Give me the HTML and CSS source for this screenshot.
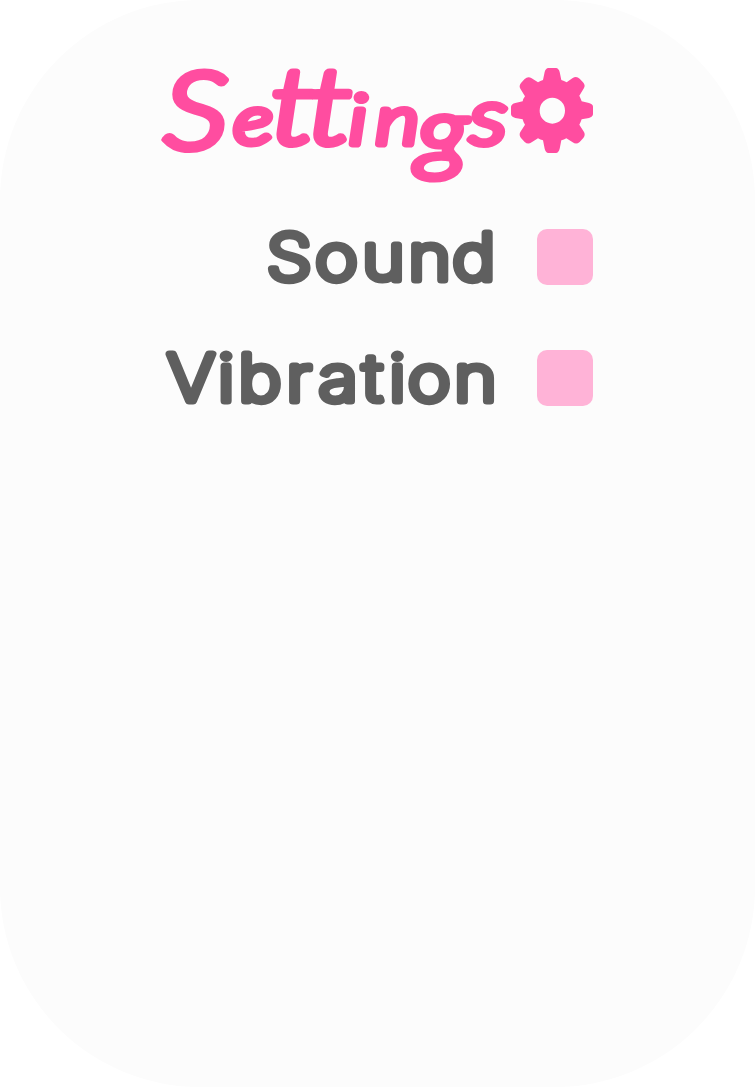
FILE: index.html
```html
<!DOCTYPE html>
<html lang="en">
<head>
<meta charset="utf-8">
<title>Settings</title>
<link rel="stylesheet" href="styles.css">
</head>
<body>
<main class="panel">
  <header class="heading">
    <svg class="title" width="349" height="128" viewBox="162 65 349 128" role="heading" aria-level="1">
      <text transform="scale(1.22 1)"><tspan class="initial" x="134" y="149.5">S</tspan><tspan class="mid" x="191.5" y="144">e</tspan><tspan class="tall" x="222 252" y="144">tt</tspan><tspan class="mid" x="286 308" y="144">in</tspan><tspan class="tail" x="342" y="162">g</tspan><tspan class="last" x="385" y="144">s</tspan></text>
    </svg>
    <svg class="gear" width="82" height="85" viewBox="33 39 246 255" aria-hidden="true">
      <path fill-rule="evenodd" d="M145 39H168Q176 40 179 51L184 75Q192 77 200 82L217 70Q229 62 239 71L249 82Q257 91 252 99L238 122Q242 130 245 139L267 144Q279 148 279 155V178Q278 186 267 189L245 193Q242 202 238 209L252 231Q257 240 250 249L239 261Q229 270 218 262L199 250Q192 254 184 256L179 281Q176 293 168 294H145Q137 293 134 281L129 256Q121 254 114 250L95 262Q84 270 74 261L63 249Q56 240 61 231L75 209Q70 202 68 193L46 189Q34 186 33 178V155Q34 147 46 144L68 139Q70 130 75 124L61 101Q56 93 63 84L74 72Q84 63 95 70L114 82Q121 77 129 75L134 51Q137 40 145 39ZM157 128A38 39 0 1 0 157 206A38 39 0 1 0 157 128Z"/>
    </svg>
  </header>
  <section class="options">
    <div class="option">
      <svg class="label" width="330" height="57" viewBox="165 229 330 57"><text transform="scale(1.13 1)" y="280.5" x="236 279 320.5 361.5 400.5">Sound</text></svg>
      <span class="box" role="checkbox" aria-checked="false" aria-label="Sound"></span>
    </div>
    <div class="option">
      <svg class="label" width="330" height="57" viewBox="165 229 330 57"><text transform="scale(1.13 1)" y="280.5" x="148 193 211 253.5 282 321 344.5 361 402">Vibration</text></svg>
      <span class="box" role="checkbox" aria-checked="false" aria-label="Vibration"></span>
    </div>
  </section>
</main>
</body>
</html>
```
FILE: styles.css
```css
body { margin: 0; background: #fff; }
.panel {
  box-sizing: border-box;
  height: 1087px;
  padding: 65px 162px 0;
  border-radius: 200px;
  background: #fcfcfc;
}
.heading { display: flex; align-items: flex-start; height: 164px; }
.title {
  flex: none;
  overflow: visible;
  font: italic 300 72px Lato, sans-serif;
  fill: #ff4da0;
  stroke: #ff4da0;
  stroke-width: 7;
  stroke-linejoin: round;
}
.initial { font-size: 107px; }
.mid { font-size: 69px; }
.tall { font-size: 107px; }
.tail { font-size: 90px; }
.last { font-size: 78px; }
.gear { flex: none; margin-top: 3px; fill: #ff4da0; }
.options { display: flex; flex-direction: column; gap: 65px; padding-left: 3px; }
.option { display: flex; gap: 42px; height: 56px; }
.label {
  flex: none;
  overflow: visible;
  font: 200 64px Inter, sans-serif;
  fill: #5f5f5f;
  stroke: #5f5f5f;
  stroke-width: 7;
  stroke-linejoin: round;
}
.box { width: 56px; height: 56px; border-radius: 10px; background: #ffb3d7; }
```
